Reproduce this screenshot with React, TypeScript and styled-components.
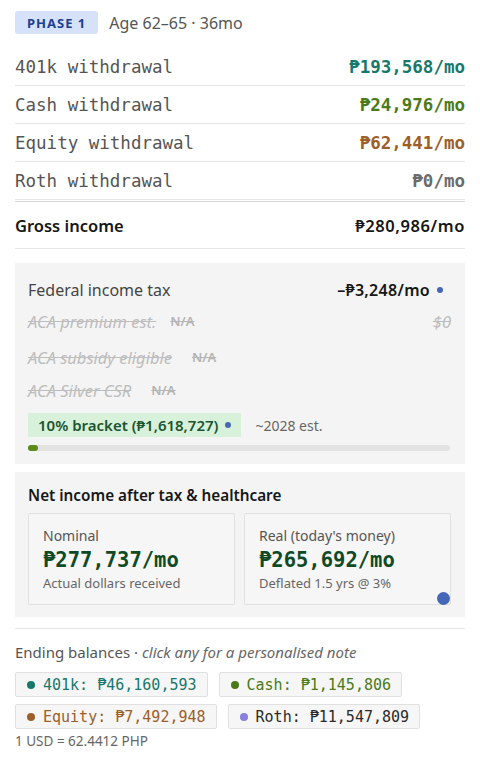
import React from "react";
import styled, { createGlobalStyle } from "styled-components";

const sans = `"Noto Sans", "Open Sans", sans-serif`;
const mono = `"DejaVu Sans Mono", "Liberation Mono", monospace`;

const GlobalStyle = createGlobalStyle`
  html, body {
    margin: 0;
    padding: 0;
    background: #ffffff;
  }
  body {
    font-family: ${sans};
    color: #222;
  }
`;

const Page = styled.div`
  padding: 11px 15px 0 15px;
  width: 450px;
`;

const Header = styled.div`
  display: flex;
  align-items: center;
  gap: 11px;
  margin-bottom: 14px;
`;

const PhaseBadge = styled.span`
  display: inline-flex;
  align-items: center;
  height: 23px;
  padding: 0 12px;
  border-radius: 3px;
  background: #d6e2fa;
  color: #1c3f94;
  font-size: 13px;
  font-weight: 700;
  letter-spacing: 1px;
`;

const HeaderText = styled.span`
  font-size: 16px;
  color: #555;
`;

const WithdrawRow = styled.div`
  display: flex;
  justify-content: space-between;
  align-items: center;
  height: 37px;
  border-bottom: 1px solid #e6e6e6;
  font-family: ${mono};
  font-size: 17.5px;
`;

const RowLabel = styled.span`
  color: #555;
`;

const RowValue = styled.span<{ $color: string }>`
  color: ${(p) => p.$color};
  font-weight: 700;
`;

const GrossRow = styled.div`
  display: flex;
  justify-content: space-between;
  align-items: center;
  height: 46px;
  border-top: 1px solid #d8d8d8;
  border-bottom: 1px solid #e6e6e6;
  margin-top: 1px;
  font-size: 16.5px;
  font-weight: 600;
  color: #161616;
`;

const GrossValue = styled.span`
  letter-spacing: 0.6px;
`;

const Panel = styled.div`
  background: #f4f4f4;
  padding: 16px 14px 13px 13px;
  margin-top: 14px;
`;

const TaxRow = styled.div`
  display: flex;
  justify-content: space-between;
  align-items: center;
  font-size: 16px;
  color: #444;
  height: 22px;
`;

const TaxValue = styled.span`
  display: flex;
  align-items: center;
  gap: 7px;
  color: #161616;
  font-weight: 600;
  margin-right: 8px;
  letter-spacing: 0.3px;
`;

const Dot = styled.span<{ $color: string; $size?: number }>`
  display: inline-block;
  width: ${(p) => p.$size ?? 6}px;
  height: ${(p) => p.$size ?? 6}px;
  border-radius: 50%;
  background: ${(p) => p.$color};
  flex-shrink: 0;
`;

const AcaRow = styled.div<{ $h: number }>`
  display: flex;
  align-items: center;
  height: ${(p) => p.$h}px;
  font-size: 16.5px;
  color: #bdbdbd;
`;

const Struck = styled.span`
  font-style: italic;
  text-decoration: line-through;
`;

const NA = styled.span<{ $gap: number }>`
  margin-left: ${(p) => p.$gap}px;
  font-size: 13px;
  font-weight: 600;
  color: #b5b5b5;
  text-decoration: line-through;
`;

const AcaRight = styled(Struck)`
  margin-left: auto;
`;

const BracketLine = styled.div`
  display: flex;
  align-items: center;
  gap: 14px;
  margin-top: 6px;
`;

const BracketBadge = styled.span`
  display: inline-flex;
  align-items: center;
  gap: 7px;
  height: 24px;
  padding: 0 10px;
  background: #d8f1da;
  color: #1b5530;
  font-size: 15px;
  font-weight: 600;
`;

const EstText = styled.span`
  font-size: 14px;
  color: #666;
`;

const Track = styled.div`
  margin-top: 8px;
  height: 6px;
  border-radius: 3px;
  background: #e2e2e2;
  margin-right: 1px;
`;

const Fill = styled.div`
  height: 100%;
  border-radius: 3px;
  background: #5c8b1c;
`;

const NetPanel = styled.div`
  position: relative;
  background: #f4f4f4;
  padding: 13px 14px 12px 13px;
  margin-top: 8px;
`;

const NetTitle = styled.div`
  font-size: 15.3px;
  font-weight: 600;
  color: #161616;
  margin-bottom: 8px;
`;

const CardGrid = styled.div`
  display: grid;
  grid-template-columns: 1fr 1fr;
  gap: 9px;
`;

const Card = styled.div`
  background: #f6f6f6;
  border: 1px solid #e1e1e1;
  border-radius: 2px;
  padding: 12px 14px 12px 14px;
`;

const CardLabel = styled.div`
  font-size: 14px;
  color: #555;
`;

const CardValue = styled.div`
  font-family: ${mono};
  font-size: 20.5px;
  font-weight: 700;
  color: #0f4a26;
  margin-top: 2px;
  line-height: 26px;
`;

const CardSub = styled.div`
  font-size: 13px;
  color: #666;
  margin-top: 1px;
`;

const CornerDot = styled.span`
  position: absolute;
  right: 15px;
  bottom: 12px;
  width: 13px;
  height: 13px;
  border-radius: 50%;
  background: #4666b8;
`;

const Divider = styled.div`
  height: 1px;
  background: #e6e6e6;
  margin-top: 11px;
`;

const BalancesTitle = styled.div`
  font-size: 15px;
  color: #555;
  margin-top: 13px;
`;

const Hint = styled.em`
  color: #666;
`;

const Chips = styled.div`
  display: flex;
  flex-wrap: wrap;
  gap: 7px 11px;
  margin-top: 10px;
  width: 420px;
`;

const Chip = styled.button<{ $color: string }>`
  display: inline-flex;
  align-items: center;
  gap: 8px;
  height: 25px;
  padding: 0 10px 0 11px;
  background: #f6f6f6;
  border: 1px solid #e0e0e0;
  border-radius: 2px;
  font-family: ${mono};
  font-size: 15px;
  color: ${(p) => p.$color};
  cursor: pointer;
`;

const Rate = styled.div`
  font-size: 13.5px;
  color: #666;
  margin-top: 3px;
`;

const withdrawals = [
  { label: "401k withdrawal", value: "₱193,568/mo", color: "#17786c" },
  { label: "Cash withdrawal", value: "₱24,976/mo", color: "#4b7a19" },
  { label: "Equity withdrawal", value: "₱62,441/mo", color: "#9c5f2a" },
  { label: "Roth withdrawal", value: "₱0/mo", color: "#6b6b6b" },
];

const balances = [
  { label: "401k: ₱46,160,593", color: "#17786c", dot: "#17786c" },
  { label: "Cash: ₱1,145,806", color: "#4b7a19", dot: "#4b7a19" },
  { label: "Equity: ₱7,492,948", color: "#9c5f2a", dot: "#9c5f2a" },
  { label: "Roth: ₱11,547,809", color: "#2a2a2a", dot: "#8b7fe0" },
];

export default function App() {
  return (
    <Page>
      <GlobalStyle />
      <Header>
        <PhaseBadge>PHASE 1</PhaseBadge>
        <HeaderText>Age 62–65 · 36mo</HeaderText>
      </Header>

      {withdrawals.map((w) => (
        <WithdrawRow key={w.label}>
          <RowLabel>{w.label}</RowLabel>
          <RowValue $color={w.color}>{w.value}</RowValue>
        </WithdrawRow>
      ))}

      <GrossRow>
        <span>Gross income</span>
        <GrossValue>₱280,986/mo</GrossValue>
      </GrossRow>

      <Panel>
        <TaxRow>
          <span>Federal income tax</span>
          <TaxValue>
            –₱3,248/mo <Dot $color="#4666b8" />
          </TaxValue>
        </TaxRow>
        <AcaRow $h={40}>
          <Struck>ACA premium est.</Struck>
          <NA $gap={14}>N/A</NA>
          <AcaRight>$0</AcaRight>
        </AcaRow>
        <AcaRow $h={32}>
          <Struck>ACA subsidy eligible</Struck>
          <NA $gap={20}>N/A</NA>
        </AcaRow>
        <AcaRow $h={34}>
          <Struck>ACA Silver CSR</Struck>
          <NA $gap={20}>N/A</NA>
        </AcaRow>
        <BracketLine>
          <BracketBadge>
            10% bracket (₱1,618,727) <Dot $color="#4666b8" />
          </BracketBadge>
          <EstText>~2028 est.</EstText>
        </BracketLine>
        <Track>
          <Fill style={{ width: "2.4%" }} />
        </Track>
      </Panel>

      <NetPanel>
        <NetTitle>Net income after tax &amp; healthcare</NetTitle>
        <CardGrid>
          <Card>
            <CardLabel>Nominal</CardLabel>
            <CardValue>₱277,737/mo</CardValue>
            <CardSub>Actual dollars received</CardSub>
          </Card>
          <Card>
            <CardLabel>Real (today's money)</CardLabel>
            <CardValue>₱265,692/mo</CardValue>
            <CardSub>Deflated 1.5 yrs @ 3%</CardSub>
          </Card>
        </CardGrid>
        <CornerDot />
      </NetPanel>

      <Divider />

      <BalancesTitle>
        Ending balances · <Hint>click any for a personalised note</Hint>
      </BalancesTitle>
      <Chips>
        {balances.map((b) => (
          <Chip key={b.label} $color={b.color}>
            <Dot $color={b.dot} $size={8} />
            {b.label}
          </Chip>
        ))}
      </Chips>
      <Rate>1 USD = 62.4412 PHP</Rate>
    </Page>
  );
}
